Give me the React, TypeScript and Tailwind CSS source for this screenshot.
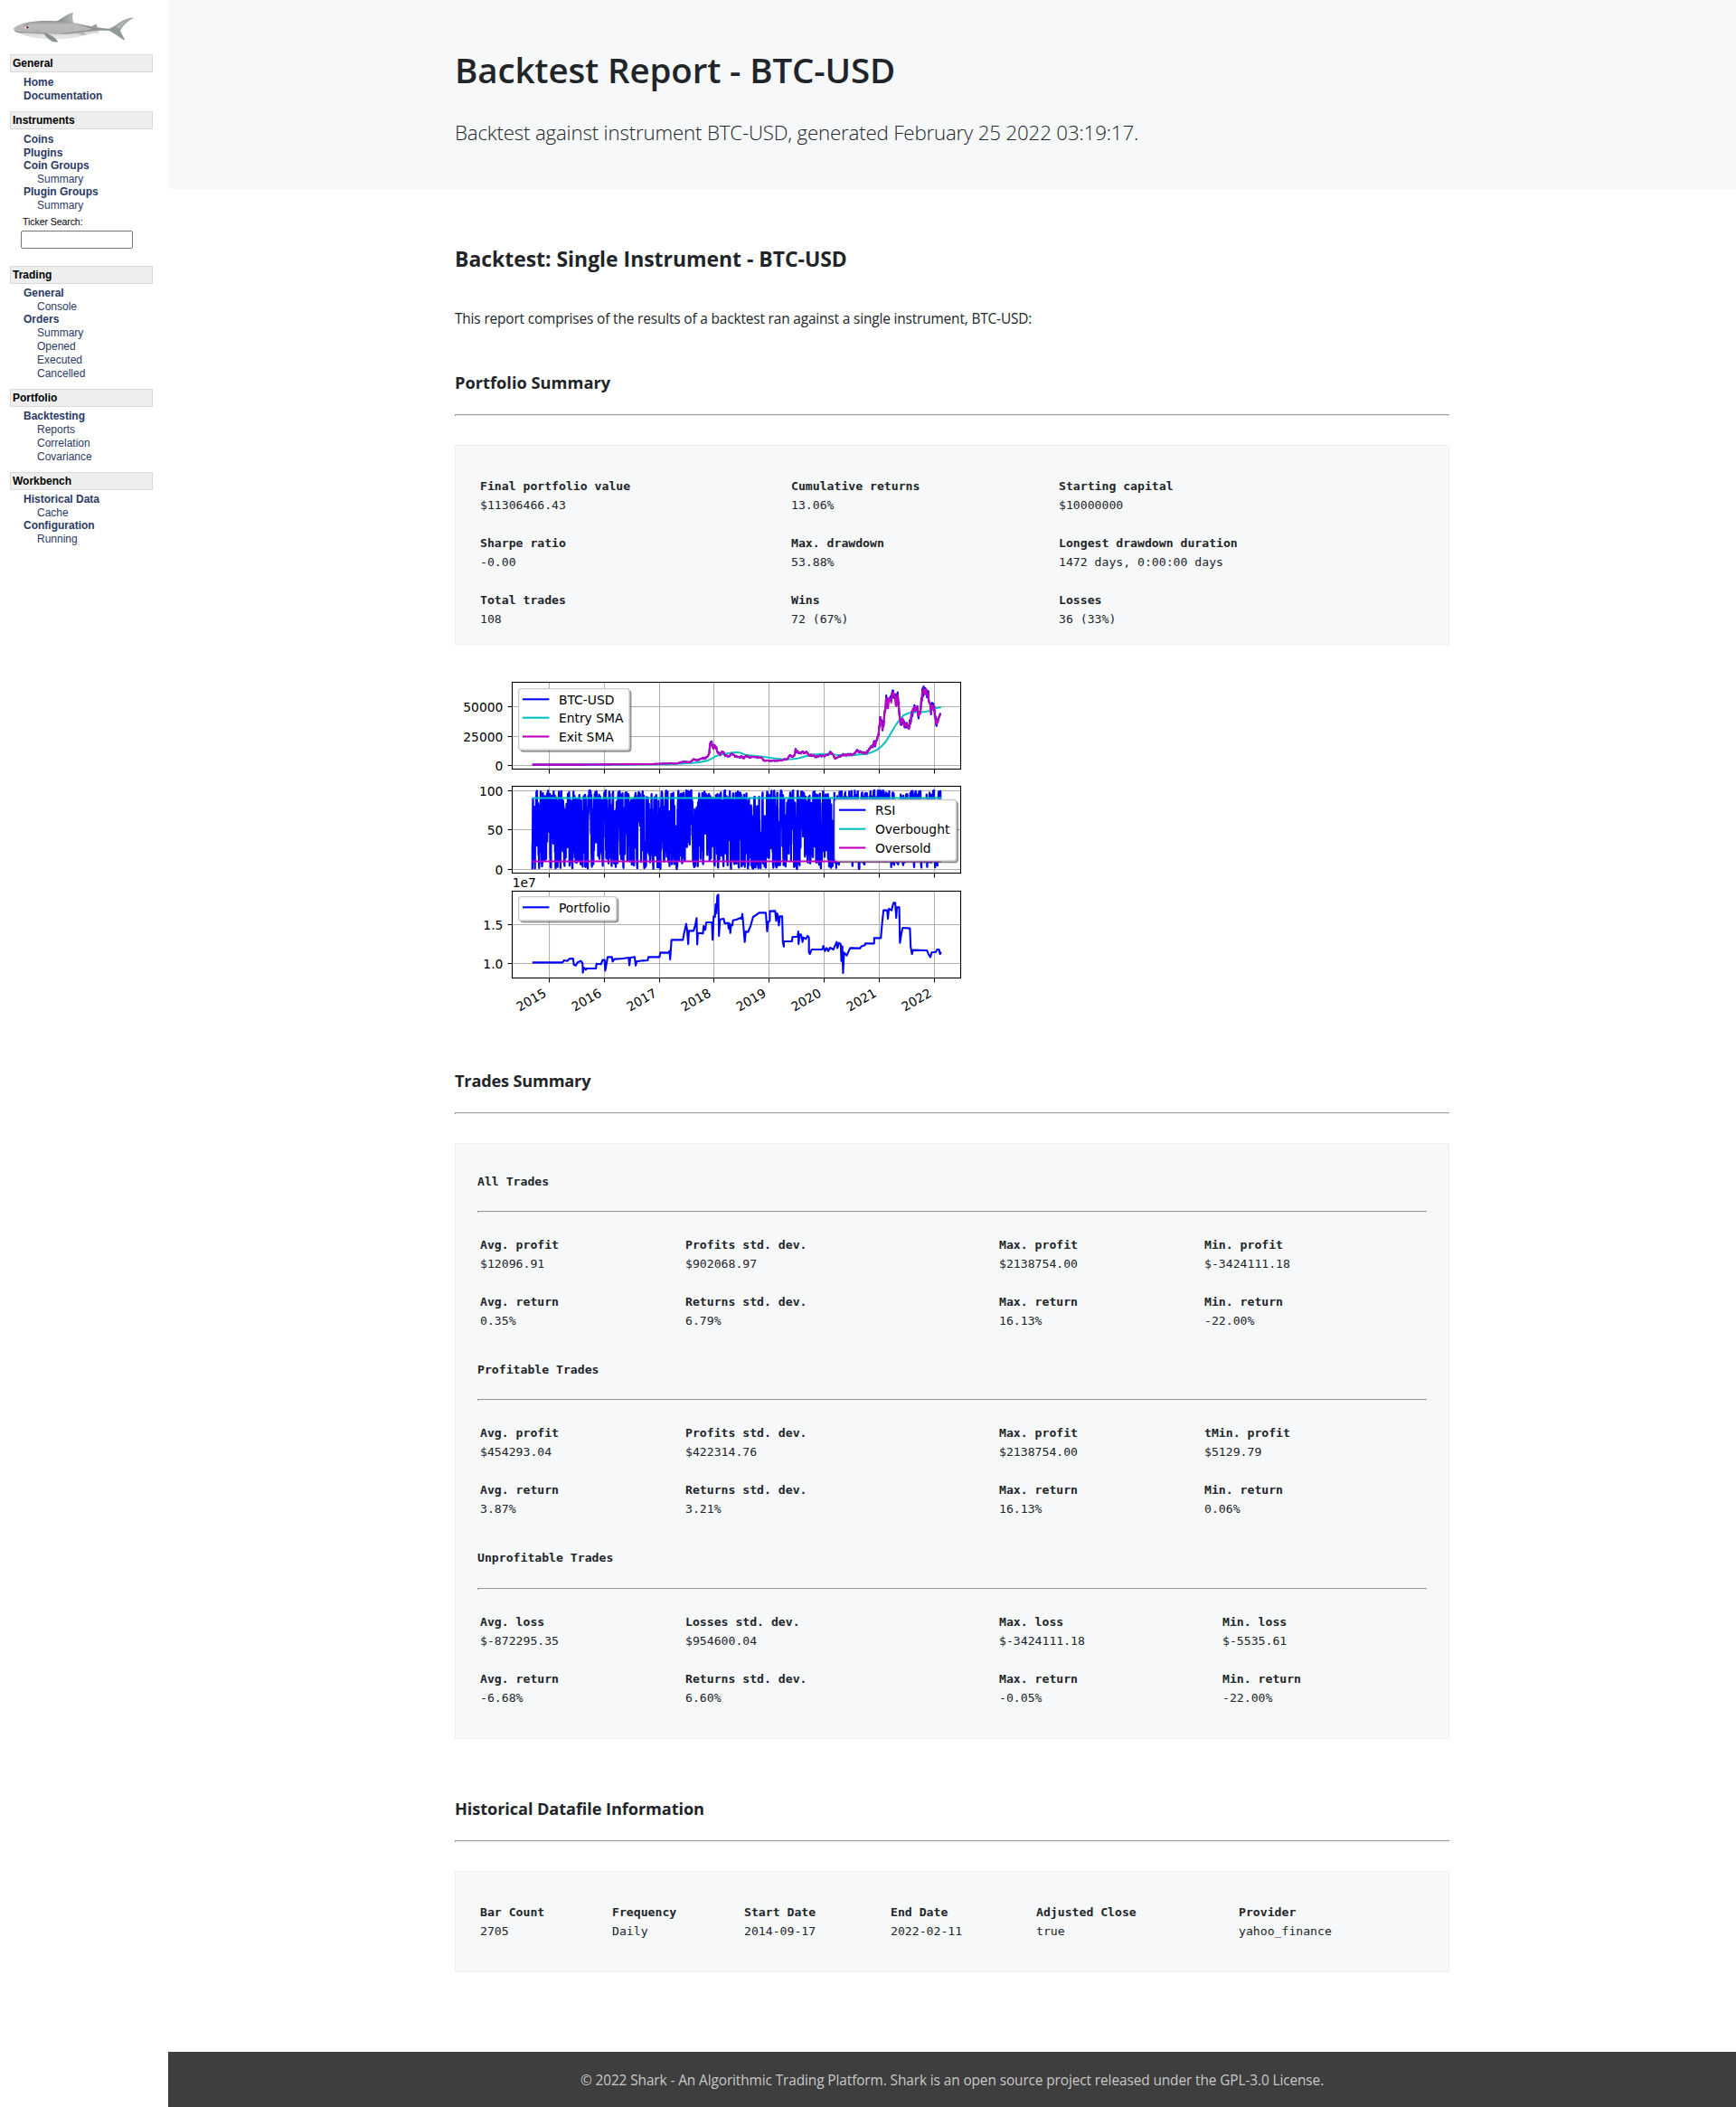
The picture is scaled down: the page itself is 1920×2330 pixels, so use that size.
import type { ReactNode } from "react";

/* ------------------------------------------------------------------ */
/* Sidebar                                                              */
/* ------------------------------------------------------------------ */

function SharkLogo() {
  return (
    <svg className="block h-[60px] w-[160px]" viewBox="0 0 480 180">
      <defs>
        <linearGradient id="body" x1="0" y1="70" x2="0" y2="128" gradientUnits="userSpaceOnUse">
          <stop offset="0" stopColor="#8f9393" />
          <stop offset="0.2" stopColor="#b9b9b9" />
          <stop offset="0.65" stopColor="#b5b5b5" />
          <stop offset="1" stopColor="#7d8585" />
        </linearGradient>
        <linearGradient id="fin" x1="0" y1="0" x2="1" y2="0">
          <stop offset="0" stopColor="#757c7c" />
          <stop offset="1" stopColor="#b7bbbb" />
        </linearGradient>
        <linearGradient id="belly" x1="0" y1="100" x2="0" y2="132" gradientUnits="userSpaceOnUse">
          <stop offset="0" stopColor="#c9c9c4" />
          <stop offset="1" stopColor="#f3f3ee" />
        </linearGradient>
      </defs>
      <path d="M62 108 C90 122 130 127 175 128 C230 131 275 118 330 103 L280 98 L100 100 Z" fill="url(#belly)" stroke="#c4c6c4" strokeWidth="1.5" />
      <path d="M256 111 L286 118 L276 108 Z" fill="#a9adad" />
      <path d="M300 106 L330 114 L322 104 Z" fill="#d4d6d4" />
      <path d="M182 73 C200 68 215 50 242 42 C238 52 240 66 243 76 Z" fill="url(#fin)" stroke="#7f8585" strokeWidth="1" />
      <path d="M303 88 L320 80 L322 91 Z" fill="#858b8b" />
      <path
        d="M44 95 C54 86 72 77 100 73 C140 67 205 68 245 76 C290 84 320 92 358 95 C375 96 385 94 392 91 L394 103 C370 102 345 100 322 101 C280 105 245 115 190 113 C160 112 120 108 92 108 C75 108 60 112 50 104 Z"
        fill="url(#body)"
      />
      <path d="M250 79 C290 86 320 93 362 96 L362 101 L318 101 C285 104 245 112 195 112 C240 106 285 102 308 96 Z" fill="#808888" opacity="0.75" />
      <path d="M50 104 C65 110 85 106 100 109 C120 111 140 110 160 112" fill="none" stroke="#737979" strokeWidth="2" />
      <path d="M146 111 C162 113 176 118 192 138 C176 141 162 134 146 111 Z" fill="#8b9191" stroke="#737979" strokeWidth="1" />
      <path d="M356 98 C385 90 402 62 442 59 C424 68 408 82 398 101 C402 112 410 124 414 133 C398 126 380 108 356 98 Z" fill="#929999" stroke="#798080" strokeWidth="1" />
      <path d="M384 90 C400 78 412 66 434 61 C416 72 404 84 398 96 Z" fill="#b0b4b4" />
      <path d="M116 96 q-5 7 0 13 M123 96 q-5 7 0 13 M130 97 q-5 7 0 13 M137 98 q-4 6 0 11" fill="none" stroke="#8d9292" strokeWidth="1.5" />
      <ellipse cx="90" cy="91" rx="8" ry="5.5" fill="#e9e4e6" />
      <circle cx="91" cy="91" r="4" fill="#6b2c48" />
      <path d="M80 85 L90 84 L95 78" fill="none" stroke="#666" strokeWidth="1.8" />
    </svg>
  );
}

function SideTitle({ children }: { children: ReactNode }) {
  return (
    <div className="h-5 w-[158px] border border-[#dadada] bg-[#eeeeee] pl-[2px] text-[12px] leading-[18px] font-bold text-black">
      {children}
    </div>
  );
}

function Group({ children }: { children: ReactNode }) {
  return <div className="pl-[15px] text-[12px] leading-[15px] font-bold text-[#2b3a63]">{children}</div>;
}

function Child({ children }: { children: ReactNode }) {
  return <div className="pl-[30px] text-[12px] leading-[15px] text-[#2b3a63]">{children}</div>;
}

function Sidebar() {
  return (
    <aside className="w-[186px] shrink-0 bg-white font-['Liberation_Sans',Arial,sans-serif] whitespace-nowrap">
      <SharkLogo />
      <nav className="pl-[11px]">
        <SideTitle>General</SideTitle>
        <div className="mt-[4px] mb-[9px]">
          <Group>Home</Group>
          <Group>Documentation</Group>
        </div>
        <SideTitle>Instruments</SideTitle>
        <div className="mt-[4px]">
          <Group>Coins</Group>
          <Group>Plugins</Group>
          <div className="-mt-px">
            <Group>Coin Groups</Group>
          </div>
          <Child>Summary</Child>
          <div className="-mt-px">
            <Group>Plugin Groups</Group>
          </div>
          <Child>Summary</Child>
        </div>
        <label className="mt-[3px] block pl-[14px] text-[10.6px] leading-[14px] tracking-[-0.1px] text-black">Ticker Search:</label>
        <input className="mt-[3px] mb-[19px] ml-[12px] block h-5 w-[124px] rounded-[2px] border border-[#767676] bg-white" />
        <SideTitle>Trading</SideTitle>
        <div className="mt-[3px] mb-[9px]">
          <Group>General</Group>
          <Child>Console</Child>
          <div className="-mt-px">
            <Group>Orders</Group>
          </div>
          <Child>Summary</Child>
          <Child>Opened</Child>
          <Child>Executed</Child>
          <Child>Cancelled</Child>
        </div>
        <SideTitle>Portfolio</SideTitle>
        <div className="mt-[3px] mb-[9px]">
          <Group>Backtesting</Group>
          <Child>Reports</Child>
          <Child>Correlation</Child>
          <Child>Covariance</Child>
        </div>
        <SideTitle>Workbench</SideTitle>
        <div className="mt-[3px]">
          <Group>Historical Data</Group>
          <Child>Cache</Child>
          <div className="-mt-px">
            <Group>Configuration</Group>
          </div>
          <Child>Running</Child>
        </div>
      </nav>
    </aside>
  );
}

/* ------------------------------------------------------------------ */
/* Chart                                                                */
/* ------------------------------------------------------------------ */

type Pt = [number, number];

const SX = 2.7034;
const SY = 3;

function parse(s: string): Pt[] {
  return s.split(" ").map((p) => {
    const [x, y] = p.split(",").map(Number);
    return [x / SX, y / SY];
  });
}

function toPath(pts: Pt[]): string {
  return pts.map(([x, y], i) => `${i ? "L" : "M"}${x.toFixed(2)} ${y.toFixed(2)}`).join("");
}

function rng(seed: number) {
  let s = seed;
  return () => {
    s = (s * 1664525 + 1013904223) % 4294967296;
    return s / 4294967296;
  };
}

/* Adds day-to-day variation that grows with the price level. */
function roughen(pts: Pt[], seed: number, amp: number): Pt[] {
  const r = rng(seed);
  const out: Pt[] = [];
  for (let i = 0; i < pts.length - 1; i++) {
    const [x0, y0] = pts[i];
    const [x1, y1] = pts[i + 1];
    const n = Math.max(1, Math.round((x1 - x0) / 0.6));
    for (let k = 0; k < n; k++) {
      const y = y0 + ((y1 - y0) * k) / n;
      const level = Math.max(0, 105.6 - y);
      out.push([x0 + ((x1 - x0) * k) / n, y + (r() - 0.5) * level * amp]);
    }
  }
  out.push(pts[pts.length - 1]);
  return out;
}

const PRICE = parse(
  "240,317 380,317 470,316 560,315 600,315 620,314 640,313 655,312 665,314 680,311 690,307 700,308 712,309 722,299 730,302 738,301 750,293 755,297 765,288 769,280 771,252 776,243 781,265 784,252 790,262 795,278 802,284 808,272 815,285 825,290 832,285 838,280 845,288 858,292 866,289 872,296 879,287 888,292 900,291 925,293 932,303 945,304 975,303 990,301 1003,297 1010,286 1018,289 1024,286 1027,268 1033,274 1040,280 1047,272 1053,280 1060,276 1068,287 1080,285 1088,291 1100,287 1115,288 1130,277 1140,283 1145,298 1155,290 1170,284 1180,285 1200,282 1210,271 1225,278 1240,277 1247,265 1258,253 1262,243 1265,250 1272,230 1277,200 1280,162 1287,196 1292,165 1298,102 1303,135 1308,87 1313,116 1317,84 1323,76 1327,128 1332,94 1337,150 1341,182 1347,162 1353,190 1358,180 1365,198 1372,165 1378,130 1384,135 1388,117 1393,145 1398,153 1403,110 1408,66 1413,85 1417,63 1422,85 1427,110 1432,140 1437,122 1442,140 1447,175 1452,178 1458,150 1461,150",
);
const ENTRY = parse(
  "240,317 560,317 640,316 700,313 740,309 765,303 777,296 785,290 805,283 830,278 850,276 862,277 875,284 900,287 925,290 960,295 985,298 1015,299 1035,296 1060,288 1080,283 1110,281 1140,283 1170,286 1200,285 1230,282 1250,278 1270,268 1282,258 1295,243 1310,216 1325,188 1338,167 1350,153 1365,146 1380,143 1410,142 1430,138 1445,130 1462,126",
);
const EQUITY = parse(
  "240,973 330,973 335,966 345,968 350,961 362,960 364,980 370,983 375,973 385,968 390,975 391,1007 394,990 400,997 402,993 430,993 432,977 445,979 450,965 456,965 458,1000 462,975 465,955 478,955 480,970 485,962 510,960 528,957 530,982 533,957 546,955 549,983 552,970 570,967 585,966 587,955 620,955 623,940 646,941 650,935 652,963 656,898 690,898 693,880 700,845 703,868 706,912 708,868 722,868 727,850 731,826 733,913 735,875 750,877 752,852 757,865 760,840 777,840 779,898 782,820 786,822 788,780 790,810 793,752 796,748 797,815 798,885 801,830 812,828 815,843 825,842 827,860 829,843 832,875 834,848 838,850 840,833 852,830 860,826 865,828 868,812 871,850 875,905 878,870 885,872 893,850 900,822 910,815 918,808 938,808 942,870 945,838 950,835 950,803 966,802 969,835 972,810 975,822 977,850 980,820 987,820 989,905 992,920 992,903 1016,903 1018,888 1033,888 1035,870 1036,912 1039,880 1043,880 1048,905 1050,890 1058,895 1063,885 1067,890 1067,940 1070,945 1075,930 1107,930 1110,918 1115,935 1120,925 1125,935 1130,924 1140,930 1143,922 1150,905 1152,925 1157,908 1162,912 1164,968 1167,920 1169,1008 1172,940 1180,950 1190,925 1220,926 1223,920 1235,915 1235,910 1262,910 1262,892 1282,892 1286,840 1290,800 1301,800 1303,828 1306,795 1314,800 1316,790 1320,775 1325,775 1328,825 1330,790 1337,790 1339,908 1343,880 1347,858 1369,860 1371,920 1375,945 1378,932 1420,933 1424,945 1430,955 1434,940 1447,938 1450,930 1456,930 1459,945 1462,938",
);

/* Two-period RSI over a mildly mean-reverting walk, one sample per day. */
function rsiPath(): Pt[] {
  const r = rng(20140917);
  const days = 2705;
  let up = 0.5;
  let down = 0.5;
  let last = 0;
  const pts: Pt[] = [
    [88.8, 221.3],
    [88.9, 194],
  ];
  for (let i = 1; i < days; i++) {
    const vol = 0.3 + r() * r() * 3;
    const move = (r() + r() - 0.97) * vol - last * 0.12;
    last = move;
    up = (up + Math.max(move, 0)) / 2;
    down = (down + Math.max(-move, 0)) / 2;
    const v = (100 * up) / (up + down);
    pts.push([88.8 + (i / days) * 452, 221.3 - v * 0.873]);
  }
  return pts;
}

const PRICE_RAW = toPath(roughen(PRICE, 7, 0.2));
const PRICE_SMA = toPath(roughen(PRICE, 7, 0.1));
const ENTRY_PATH = toPath(ENTRY);
const RSI_PATH = toPath(rsiPath());
const EQUITY_PATH = toPath(EQUITY);

const YEARS = [2015, 2016, 2017, 2018, 2019, 2020, 2021, 2022];
const YEAR_X = [107.5, 168.5, 229.5, 289.5, 350.5, 411.5, 472.5, 533.5];
const BLUE = "#0000ff";
const CYAN = "#00bfbf";
const MAGENTA = "#bf00bf";

function Panel({ top, ticks, children }: { top: number; ticks: [number, string][]; children: ReactNode }) {
  return (
    <g>
      <g stroke="#b0b0b0" strokeWidth="1.1">
        {YEAR_X.map((x) => (
          <line key={x} x1={x} x2={x} y1={top} y2={top + 96} />
        ))}
        {ticks.map(([y]) => (
          <line key={y} x1={66.5} x2={562.5} y1={y} y2={y} />
        ))}
      </g>
      {children}
      <rect x={66.5} y={top} width={496} height={96} fill="none" stroke="#000" strokeWidth="1.1" />
      <g stroke="#000" strokeWidth="1.1">
        {YEAR_X.map((x) => (
          <line key={x} x1={x} x2={x} y1={top + 96} y2={top + 101} />
        ))}
        {ticks.map(([y]) => (
          <line key={y} x1={61.5} x2={66.5} y1={y} y2={y} />
        ))}
      </g>
      {ticks.map(([y, label]) => (
        <text key={label} x={56.4} y={y + 5} textAnchor="end">
          {label}
        </text>
      ))}
    </g>
  );
}

type LegendItem = [string, string, number];

function Legend({ x, y, w, h, textX, items }: { x: number; y: number; w: number; h: number; textX: number; items: LegendItem[] }) {
  return (
    <g>
      <rect x={x + 2} y={y + 2} width={w} height={h} rx="2.8" fill="#4d4d4d" fillOpacity="0.5" stroke="#4d4d4d" strokeOpacity="0.5" />
      <rect x={x} y={y} width={w} height={h} rx="2.8" fill="#fff" stroke="#cccccc" strokeWidth="1.3" />
      {items.map(([label, color, base]) => (
        <g key={label}>
          <line x1={textX - 39.6} x2={textX - 10.2} y1={base - 5.3} y2={base - 5.3} stroke={color} strokeWidth="2.1" />
          <text x={textX + 0.3} y={base}>
            {label}
          </text>
        </g>
      ))}
    </g>
  );
}

function Chart() {
  return (
    <svg
      className="-ml-[3px] block h-[400px] w-[580px] font-['DejaVu_Sans',Verdana,sans-serif] text-[13.89px]"
      viewBox="0 0 580 400"
      fill="#000"
    >
      <Panel
        top={14.5}
        ticks={[
          [41.5, "50000"],
          [74.5, "25000"],
          [106.5, "0"],
        ]}
      >
        <g fill="none" strokeWidth="2.1" strokeLinejoin="round">
          <path d={PRICE_RAW} stroke={BLUE} />
          <path d={ENTRY_PATH} stroke={CYAN} strokeWidth="1.9" />
          <path d={PRICE_SMA} stroke={MAGENTA} />
        </g>
      </Panel>
      <Legend
        x={73.6}
        y={21.6}
        w={122.4}
        h={67.6}
        textX={117.6}
        items={[
          ["BTC-USD", BLUE, 38.6],
          ["Entry SMA", CYAN, 59],
          ["Exit SMA", MAGENTA, 79.8],
        ]}
      />
      <Panel
        top={129.5}
        ticks={[
          [134.5, "100"],
          [177.5, "50"],
          [221.5, "0"],
        ]}
      >
        <g fill="none" strokeWidth="2" strokeLinejoin="round">
          <path d={RSI_PATH} stroke={BLUE} strokeWidth="2.3" />
          <path d="M88.5 142.5H541" stroke={CYAN} />
          <path d="M88.5 212.4H541" stroke={MAGENTA} />
        </g>
      </Panel>
      <Legend
        x={423.5}
        y={144.5}
        w={134}
        h={67.4}
        textX={467.6}
        items={[
          ["RSI", BLUE, 161],
          ["Overbought", CYAN, 182],
          ["Oversold", MAGENTA, 202.8],
        ]}
      />
      <Panel
        top={245.5}
        ticks={[
          [282.5, "1.5"],
          [325.5, "1.0"],
        ]}
      >
        <path d={EQUITY_PATH} fill="none" stroke={BLUE} strokeWidth="2.1" strokeLinejoin="round" />
      </Panel>
      <text x={66.7} y={241}>
        1e7
      </text>
      <Legend x={73.6} y={251.6} w={108.3} h={26.4} textX={117.6} items={[["Portfolio", BLUE, 268.6]]} />
      {YEARS.map((year, i) => (
        <text key={year} textAnchor="end" transform={`translate(${YEAR_X[i] - 2.2} 361) rotate(-30)`}>
          {year}
        </text>
      ))}
    </svg>
  );
}

/* ------------------------------------------------------------------ */
/* Report                                                               */
/* ------------------------------------------------------------------ */

function Rule({ className }: { className: string }) {
  return <div className={`h-[2px] border-t border-l border-t-[#9a9a9a] border-l-[#9a9a9a] bg-[#eeeeee] ${className}`} />;
}

function Box({ className, children }: { className: string; children: ReactNode }) {
  return (
    <div
      className={`mt-8 border border-[#f0f1f2] bg-[#f7f8fa] px-6 font-['DejaVu_Sans_Mono',monospace] text-[13.15px] leading-[21px] ${className}`}
    >
      {children}
    </div>
  );
}

type Stat = [string, string];

function Stats({ cols, rows, className = "" }: { cols: string; rows: Stat[][]; className?: string }) {
  return (
    <div className={`flex flex-col gap-[21px] pl-[3px] whitespace-nowrap ${className}`}>
      {rows.map((row, i) => (
        <div key={i} className={`grid ${cols}`}>
          {row.map(([label, value]) => (
            <div key={label}>
              <div className="font-bold">{label}</div>
              <div>{value}</div>
            </div>
          ))}
        </div>
      ))}
    </div>
  );
}

function App() {
  return (
    <div className="flex h-[2330px] w-[1920px] overflow-hidden bg-white">
      <Sidebar />
      <main className="flex w-[1734px] flex-col font-['Open_Sans',sans-serif] text-[#212529]">
        <header className="h-[209px] bg-[#f7f8fa] pt-[53px]">
          <div className="mx-auto w-[1100px]">
            <h1 className="text-[38.5px] leading-[48px] font-semibold tracking-[-0.14px]">Backtest Report - BTC-USD</h1>
            <p className="mt-[30px] text-[22.3px] leading-[32px] font-light tracking-[-0.175px]">
              Backtest against instrument BTC-USD, generated February 25 2022 03:19:17.
            </p>
          </div>
        </header>

        <section className="mx-auto w-[1100px]">
          <h2 className="mt-[62px] text-[22.92px] leading-[32px] font-bold">Backtest: Single Instrument - BTC-USD</h2>
          <p className="mt-[38px] text-[15.4px] leading-[24px] tracking-[-0.146px]">
            This report comprises of the results of a backtest ran against a single instrument, BTC-USD:
          </p>

          <h3 className="mt-[46px] text-[18.25px] leading-[24px] font-bold">Portfolio Summary</h3>
          <Rule className="mt-[23px]" />
          <Box className="h-[221px] pt-[34px]">
            <Stats
              cols="grid-cols-[344px_296px_1fr]"
              rows={[
                [
                  ["Final portfolio value", "$11306466.43"],
                  ["Cumulative returns", "13.06%"],
                  ["Starting capital", "$10000000"],
                ],
                [
                  ["Sharpe ratio", "-0.00"],
                  ["Max. drawdown", "53.88%"],
                  ["Longest drawdown duration", "1472 days, 0:00:00 days"],
                ],
                [
                  ["Total trades", "108"],
                  ["Wins", "72 (67%)"],
                  ["Losses", "36 (33%)"],
                ],
              ]}
            />
          </Box>

          <div className="mt-[27px]">
            <Chart />
          </div>

          <h3 className="mt-[43px] text-[18.2px] leading-[24px] font-bold tracking-[-0.2px]">Trades Summary</h3>
          <Rule className="mt-[23px]" />
          <Box className="h-[659px] pt-[31px]">
            <div className="font-bold">All Trades</div>
            <Rule className="mt-[22px]" />
            <Stats
              className="mt-[25px]"
              cols="grid-cols-[227px_347px_227px_1fr]"
              rows={[
                [
                  ["Avg. profit", "$12096.91"],
                  ["Profits std. dev.", "$902068.97"],
                  ["Max. profit", "$2138754.00"],
                  ["Min. profit", "$-3424111.18"],
                ],
                [
                  ["Avg. return", "0.35%"],
                  ["Returns std. dev.", "6.79%"],
                  ["Max. return", "16.13%"],
                  ["Min. return", "-22.00%"],
                ],
              ]}
            />
            <div className="mt-[33px] font-bold">Profitable Trades</div>
            <Rule className="mt-[22px]" />
            <Stats
              className="mt-[25px]"
              cols="grid-cols-[227px_347px_227px_1fr]"
              rows={[
                [
                  ["Avg. profit", "$454293.04"],
                  ["Profits std. dev.", "$422314.76"],
                  ["Max. profit", "$2138754.00"],
                  ["tMin. profit", "$5129.79"],
                ],
                [
                  ["Avg. return", "3.87%"],
                  ["Returns std. dev.", "3.21%"],
                  ["Max. return", "16.13%"],
                  ["Min. return", "0.06%"],
                ],
              ]}
            />
            <div className="mt-[33px] font-bold">Unprofitable Trades</div>
            <Rule className="mt-[23px]" />
            <Stats
              className="mt-[25px]"
              cols="grid-cols-[227px_347px_247px_1fr]"
              rows={[
                [
                  ["Avg. loss", "$-872295.35"],
                  ["Losses std. dev.", "$954600.04"],
                  ["Max. loss", "$-3424111.18"],
                  ["Min. loss", "$-5535.61"],
                ],
                [
                  ["Avg. return", "-6.68%"],
                  ["Returns std. dev.", "6.60%"],
                  ["Max. return", "-0.05%"],
                  ["Min. return", "-22.00%"],
                ],
              ]}
            />
          </Box>

          <h3 className="mt-[65px] text-[18.2px] leading-[24px] font-bold tracking-[-0.1px]">Historical Datafile Information</h3>
          <Rule className="mt-[23px]" />
          <Box className="h-[112px] pt-[34px]">
            <Stats
              cols="grid-cols-[146px_146px_162px_161px_224px_1fr]"
              rows={[
                [
                  ["Bar Count", "2705"],
                  ["Frequency", "Daily"],
                  ["Start Date", "2014-09-17"],
                  ["End Date", "2022-02-11"],
                  ["Adjusted Close", "true"],
                  ["Provider", "yahoo_finance"],
                ],
              ]}
            />
          </Box>
        </section>

        <footer className="mt-[88px] h-[61px] bg-[#3e3e3e] text-center text-[15.4px] leading-[63px] tracking-[-0.098px] text-[#c8c8c8]">
          © 2022 Shark - An Algorithmic Trading Platform. Shark is an open source project released under the GPL-3.0 License.
        </footer>
      </main>
    </div>
  );
}

export default App;
